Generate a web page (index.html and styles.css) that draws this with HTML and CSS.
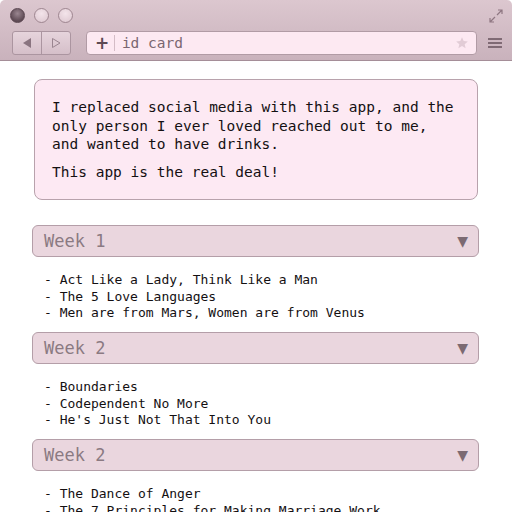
FILE: index.html
```html
<!DOCTYPE html>
<html>
<head>
<meta charset="utf-8">
<link rel="stylesheet" href="styles.css">
</head>
<body>
<div class="window">
  <header class="chrome">
    <div class="titlebar">
      <div class="lights">
        <span class="light dark"></span>
        <span class="light"></span>
        <span class="light"></span>
      </div>
      <svg class="expand" width="16" height="16" viewBox="0 0 16 16">
        <g fill="none" stroke="#8f7782" stroke-width="1.2">
          <path d="M9 7 L14 2 M10 2 H14 V6"/>
          <path d="M7 9 L2 14 M2 10 V14 H6"/>
        </g>
      </svg>
    </div>
    <div class="toolbar">
      <div class="nav">
        <span class="navbtn"><svg width="12" height="12" viewBox="0 0 12 12"><path d="M10 1 L2 6 L10 11 Z" fill="#8a7480"/></svg></span>
        <span class="navbtn"><svg width="12" height="12" viewBox="0 0 12 12"><path d="M2.5 1.5 L10 6 L2.5 10.5 Z" fill="none" stroke="#9a8590" stroke-width="1"/></svg></span>
      </div>
      <div class="url">
        <span class="plus">+</span>
        <span class="sep"></span>
        <span class="urltext">id card</span>
        <svg class="star" width="14" height="14" viewBox="0 0 24 24"><path d="M12 2 L14.9 8.6 L22 9.3 L16.6 14 L18.2 21 L12 17.3 L5.8 21 L7.4 14 L2 9.3 L9.1 8.6 Z" fill="#e2ccd6"/></svg>
      </div>
      <svg class="menu" width="14" height="12" viewBox="0 0 14 12"><g fill="#7f6a74"><rect x="0" y="1" width="14" height="2"/><rect x="0" y="5" width="14" height="2"/><rect x="0" y="9" width="14" height="2"/></g></svg>
    </div>
  </header>
  <main class="content">
    <div class="quote">
      <p>I replaced social media with this app, and the only person I ever loved reached out to me, and wanted to have drinks.</p>
      <p>This app is the real deal!</p>
    </div>
    <section class="week">
      <div class="weekhead"><span>Week 1</span><span class="arrow">▼</span></div>
      <ul class="list">
        <li>- Act Like a Lady, Think Like a Man</li>
        <li>- The 5 Love Languages</li>
        <li>- Men are from Mars, Women are from Venus</li>
      </ul>
    </section>
    <section class="week">
      <div class="weekhead"><span>Week 2</span><span class="arrow">▼</span></div>
      <ul class="list">
        <li>- Boundaries</li>
        <li>- Codependent No More</li>
        <li>- He's Just Not That Into You</li>
      </ul>
    </section>
    <section class="week">
      <div class="weekhead"><span>Week 2</span><span class="arrow">▼</span></div>
      <ul class="list">
        <li>- The Dance of Anger</li>
        <li>- The 7 Principles for Making Marriage Work</li>
      </ul>
    </section>
  </main>
</div>
</body>
</html>
```
FILE: styles.css
```css
* { box-sizing: border-box; }
html, body { margin: 0; padding: 0; background: #fff; }
body { width: 512px; height: 512px; overflow: hidden; font-family: "DejaVu Sans Mono", "Liberation Mono", monospace; }
.window { width: 512px; height: 512px; display: flex; flex-direction: column; background: #fff; }
.chrome {
  height: 61px;
  background: linear-gradient(#dcc7cf, #c9b2bc);
  border-top-left-radius: 5px;
  border-top-right-radius: 5px;
  border-bottom: 1px solid #a58e98;
  display: flex;
  flex-direction: column;
}
.titlebar { height: 30px; display: flex; align-items: center; justify-content: space-between; padding: 0 8px 0 10px; }
.lights { display: flex; gap: 9px; padding-top: 1px; }
.light {
  width: 15px; height: 15px; border-radius: 50%;
  background: radial-gradient(circle at 50% 35%, #f3e4ea, #dcc6cf);
  border: 1px solid #9e8690;
}
.light.dark { background: radial-gradient(circle at 50% 35%, #9a8690, #5e4a54 70%); border-color: #5a4650; }
.expand { margin-top: 2px; }
.toolbar { height: 30px; display: flex; align-items: center; padding: 0 10px 4px 12px; }
.nav {
  display: flex; height: 24px; width: 59px;
  border: 1px solid #ab95a0; border-radius: 3px;
  background: linear-gradient(#e6d4dc, #d5bfc9);
}
.navbtn { flex: 1; display: flex; align-items: center; justify-content: center; }
.navbtn + .navbtn { border-left: 1px solid #ab95a0; }
.url {
  margin-left: 15px; width: 392px; height: 24px;
  background: #fde9f2; border: 1px solid #b19ba5; border-radius: 4px;
  display: flex; align-items: center; padding: 0 8px 0 8px;
}
.plus { font-family: "DejaVu Sans", sans-serif; font-weight: bold; font-size: 17px; color: #5d4a54; line-height: 1; width: 12px; text-align: center; }
.sep { width: 1px; height: 16px; background: #d4bcc6; margin: 0 7px 0 7px; }
.urltext { flex: 1; font-size: 14.5px; color: #7a6670; }
.star { margin-right: -1px; }
.menu { margin-left: 11px; }
.content { flex: 1; padding: 18px 33px 0 32px; }
.quote {
  margin: 0 0 25px 2px; width: 444px; height: 121px;
  background: #fde9f3; border: 1px solid #b8a2ac; border-radius: 8px;
  padding: 18px 16px 0 17px;
  font-size: 14.5px; line-height: 18.5px; color: #141012;
}
.quote p { margin: 0 0 9.5px 0; }
.week { display: flex; flex-direction: column; }
.weekhead {
  height: 32px; width: 447px;
  background: #ead6de; border: 1px solid #b49ea8; border-radius: 6px;
  display: flex; align-items: center; justify-content: space-between;
  padding: 0 10px 0 11px;
  font-size: 17px; color: #8b7a82;
}
.arrow { font-family: "DejaVu Sans", sans-serif; font-size: 14px; color: #7c6a72; }
.list { list-style: none; margin: 0; padding: 15px 12px 10.5px 12px; font-size: 13px; line-height: 16.5px; color: #141012; }
```
